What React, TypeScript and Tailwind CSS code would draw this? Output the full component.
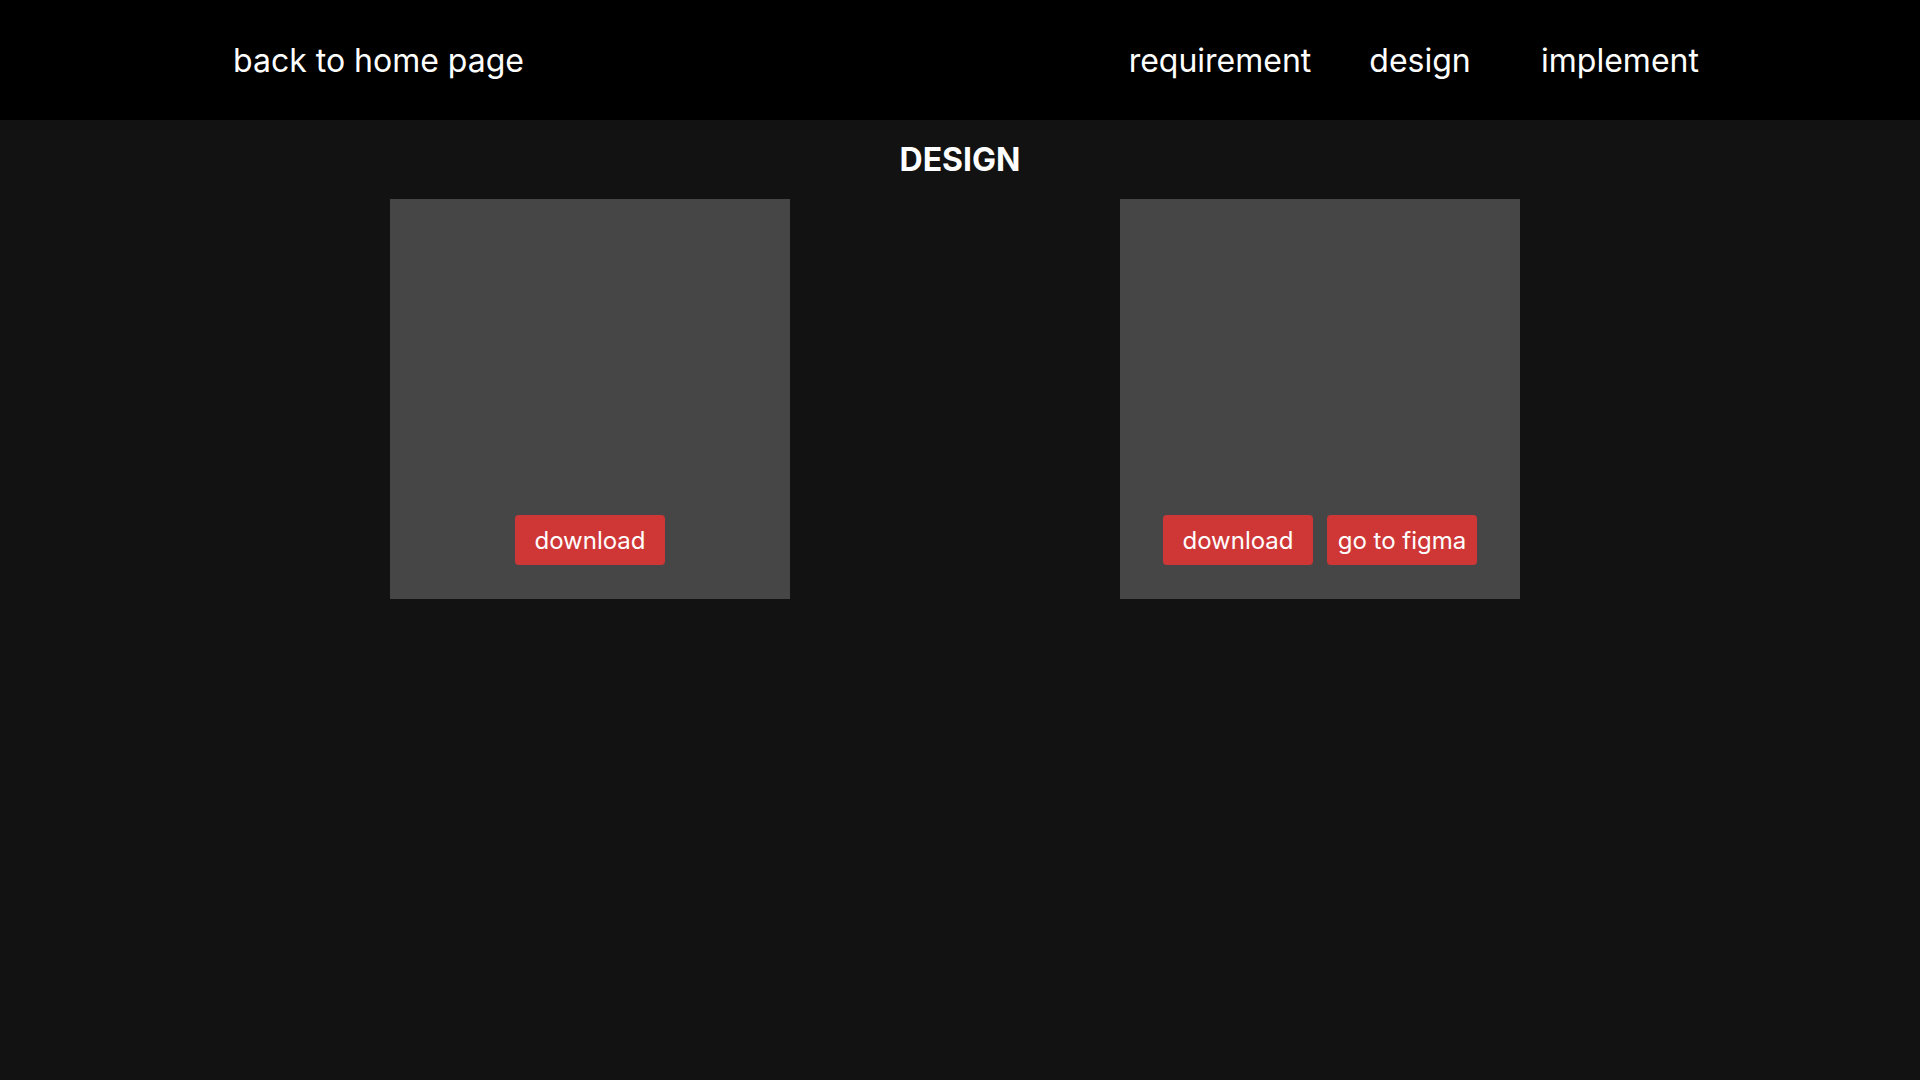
import { FC } from 'react'

const Card: FC<{ figma?: boolean }> = ({ figma }) => {
	return (
		<div className="w-[400px] h-[400px] bg-[#464646] flex flex-col justify-end items-center pb-[34px]">
			<div className="flex flex-row gap-[14px]">
				<button className="w-[150px] h-[50px] pt-[2px] rounded-[4px] bg-[#cf3737] text-white text-[24px]">
					download
				</button>
				{figma && (
					<button className="w-[150px] h-[50px] pt-[2px] rounded-[4px] bg-[#cf3737] text-white text-[24px]">
						go to figma
					</button>
				)}
			</div>
		</div>
	)
}

const App: FC = () => {
	return (
		<div className="min-h-screen bg-[#121212] text-white font-['Inter',sans-serif]">
			<header className="h-[120px] bg-black flex flex-row items-center pt-[2px] pl-[233px] pr-[200px]">
				<a className="text-[32px] cursor-pointer">back to home page</a>
				<nav className="ml-auto flex flex-row">
					<a className="w-[200px] text-center text-[32px] cursor-pointer">requirement</a>
					<a className="w-[200px] text-center text-[32px] cursor-pointer">design</a>
					<a className="w-[200px] text-center text-[32px] cursor-pointer">implement</a>
				</nav>
			</header>
			<div className="h-[79px] flex items-center justify-center">
				<h1 className="text-[32px] leading-[40px] font-bold">DESIGN</h1>
			</div>
			<div className="flex flex-row justify-center gap-[330px] pr-[10px]">
				<Card />
				<Card figma />
			</div>
		</div>
	)
}

export default App
